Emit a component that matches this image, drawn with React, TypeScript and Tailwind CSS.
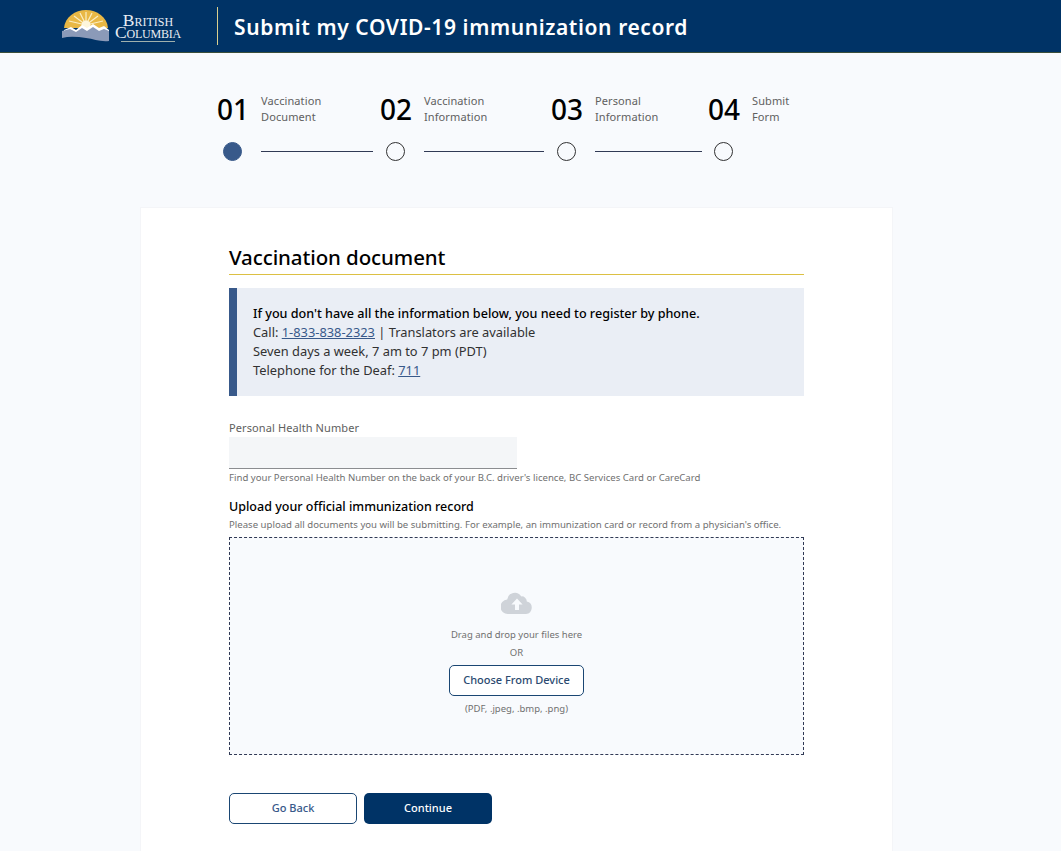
import React from "react";

interface Step {
  number: string;
  lines: string[];
  width: string;
  lineWidth: string;
  active?: boolean;
}

const steps: Step[] = [
  { number: "01", lines: ["Vaccination", "Document"], width: "w-[163px]", lineWidth: "w-[112px]", active: true },
  { number: "02", lines: ["Vaccination", "Information"], width: "w-[171px]", lineWidth: "w-[120px]" },
  { number: "03", lines: ["Personal", "Information"], width: "w-[157px]", lineWidth: "w-[107px]" },
  { number: "04", lines: ["Submit", "Form"], width: "w-[100px]", lineWidth: "w-0" },
];

const Logo = () => (
  <div className="flex items-center">
    <svg width="48" height="32" viewBox="0 0 48 32" className="mt-[-1px]">
      <path d="M2 18 C3 7 13 0 24 0 C35 0 45 7 46 18 Z" fill="#e9b845" />
      <g stroke="#fbeec4" strokeWidth="1.2">
        <path d="M24 15 L24 2" />
        <path d="M24 15 L18 3" />
        <path d="M24 15 L30 3" />
        <path d="M24 15 L12 6" />
        <path d="M24 15 L36 6" />
        <path d="M24 15 L7 11" />
        <path d="M24 15 L41 11" />
      </g>
      <circle cx="24" cy="15" r="4.5" fill="#fdf6dc" />
      <path d="M2 20 L9 17 L14 20 L20 15 L25 18 L31 14 L37 18 L42 16 L47 20 L47 24 L2 24 Z" fill="#ffffff" />
      <path d="M0 21 L8 19 L14 22 L20 18 L25 21 L31 17 L37 21 L42 19 L47 21 L47 31 C38 32 32 29 24 28 C16 27 8 26 0 28 Z" fill="#8b9ab8" />
    </svg>
    <div className="ml-[3px] w-[70px] font-['Liberation_Serif',serif] text-[#e8edf3] mt-[4px]">
      <div className="text-center text-[17.5px] leading-[12px] [font-variant:small-caps]">British</div>
      <div className="text-center text-[17.5px] leading-[13px] tracking-[-0.2px] [font-variant:small-caps] whitespace-nowrap">Columbia</div>
      <div className="h-px bg-[#9fb0ad] w-[54px] ml-[8px] mt-[2px]"></div>
    </div>
  </div>
);

const Stepper = () => (
  <div className="flex ml-[217px] pt-[44px] h-[154px]">
    {steps.map((step) => (
      <div key={step.number} className={step.width}>
        <div className="flex h-[32px]">
          <div className="w-[44px] text-[28px] leading-[32px] mt-[-4px] mb-[4px] font-medium text-black">{step.number}</div>
          <div className="text-[11px] leading-[16px] tracking-[0.1px] text-[#606060] mt-[-4px]">
            {step.lines.map((line) => (
              <div key={line}>{line}</div>
            ))}
          </div>
        </div>
        <div className="flex items-center mt-[13px] ml-[6px]">
          <div
            className={
              step.active
                ? "w-[19px] h-[19px] rounded-full bg-[#38598a] border border-[#38598a] shrink-0"
                : "w-[19px] h-[19px] rounded-full border border-[#313132] shrink-0"
            }
          ></div>
          <div className={`ml-[19px] h-px bg-[#313a55] ${step.lineWidth}`}></div>
        </div>
      </div>
    ))}
  </div>
);

const CloudUpload = () => (
  <svg width="32" height="24" viewBox="0 0 32 24">
    <path
      d="M25.8 10.4 A5 5 0 0 0 20.2 5.4 A7.6 7.6 0 0 0 6.2 8.6 A7.2 7.2 0 0 0 7.2 23 H25 A6.4 6.4 0 0 0 25.8 10.4 Z M16 7.6 L21.6 13.6 H18 V19 H14 V13.6 H10.4 Z"
      fill="#cfd3d9"
      fillRule="evenodd"
    />
  </svg>
);

export default function App() {
  return (
    <div className="h-[851px] overflow-hidden bg-[#f8fafd] font-['Noto_Sans',sans-serif]">
      <header className="h-[53px] bg-[#003366] border-b border-[#3b4f3a] flex items-center pl-[62px]">
        <Logo />
        <div className="ml-[34px] h-[38px] w-px bg-[#d8cf8e]"></div>
        <h1 className="ml-[16px] text-[21px] leading-[30px] font-semibold tracking-[0.6px] text-white mt-[1px]">
          Submit my COVID-19 immunization record
        </h1>
      </header>

      <Stepper />

      <main className="mx-[140px] w-[753px] h-[700px] bg-white border border-[#f4f5f8] pt-[35px] px-[88px]">
        <h2 className="text-[20.5px] leading-[28px] font-medium text-black tracking-[-0.1px]">Vaccination document</h2>
        <div className="h-px bg-[#dcc043] mt-[3px]"></div>

        <div className="mt-[13px] h-[108px] bg-[#eaeef5] border-l-[8px] border-[#38598a] pl-[16px] pt-[16px] text-[12.85px] leading-[19px] text-[#313132]">
          <p className="text-[12.6px] font-medium text-black">If you don't have all the information below, you need to register by phone.</p>
          <p>
            Call: <a className="underline text-[#38598a]">1-833-838-2323</a> | Translators are available
          </p>
          <p>Seven days a week, 7 am to 7 pm (PDT)</p>
          <p>
            Telephone for the Deaf: <a className="underline text-[#38598a]">711</a>
          </p>
        </div>

        <label className="block mt-[24px] text-[11px] leading-[16px] tracking-[0.1px] text-[#606060]">Personal Health Number</label>
        <div className="mt-[1px] h-[32px] w-[288px] bg-[#f4f6f8] border-b border-[#8b8d90]"></div>
        <p className="mt-[2px] text-[9.6px] leading-[13px] text-[#707070]">
          Find your Personal Health Number on the back of your B.C. driver's licence, BC Services Card or CareCard
        </p>

        <h3 className="mt-[14px] text-[12.5px] leading-[18px] font-medium text-black">Upload your official immunization record</h3>
        <p className="mt-[2px] text-[9.6px] leading-[13px] text-[#707070]">
          Please upload all documents you will be submitting. For example, an immunization card or record from a physician's office.
        </p>

        <div className="mt-[6px] h-[218px] bg-[#f8fafd] border border-dashed border-[#313a55] flex flex-col items-center pt-[53px]">
          <CloudUpload />
          <p className="mt-[13px] text-[9.5px] leading-[14px] text-[#707070]">Drag and drop your files here</p>
          <p className="mt-[4px] text-[9.5px] leading-[14px] text-[#707070]">OR</p>
          <button className="mt-[5px] w-[135px] h-[31px] bg-white border border-[#1a4673] rounded-[5px] text-[11px] font-medium text-[#2b4a70]">
            Choose From Device
          </button>
          <p className="mt-[6px] text-[9.5px] leading-[14px] text-[#707070]">(PDF, .jpeg, .bmp, .png)</p>
        </div>

        <div className="flex gap-[7px] mt-[38px]">
          <button className="w-[128px] h-[31px] bg-white border border-[#1a4673] rounded-[5px] text-[11px] font-medium text-[#38598a]">
            Go Back
          </button>
          <button className="w-[128px] h-[31px] bg-[#003366] rounded-[5px] text-[11px] font-medium text-white">
            Continue
          </button>
        </div>
      </main>
    </div>
  );
}
